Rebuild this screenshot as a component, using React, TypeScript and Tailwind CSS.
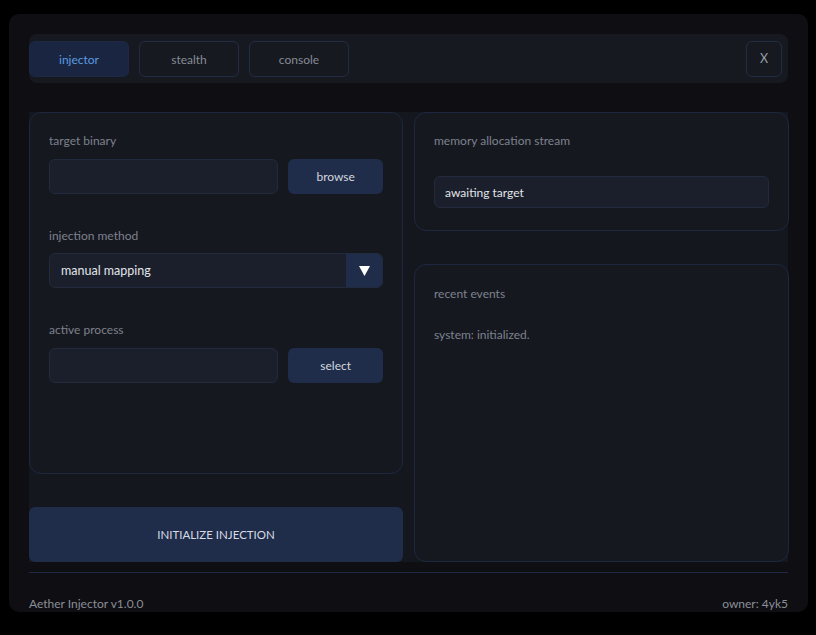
import { useState } from "react";

const font = { fontFamily: 'Lato, "Noto Sans", sans-serif' };

function Field({ label, action }: { label: string; action: string }) {
  return (
    <div>
      <div className="text-[12px] leading-4 text-[#7d828d]">{label}</div>
      <div className="mt-[10px] flex gap-[10px]">
        <div className="h-[35px] w-[230px] rounded-md border border-[#222a3d] bg-[#1b1f2b]" />
        <button className="h-[35px] w-[95px] rounded-md bg-[#1f2c4a] pt-px text-[12px] text-[#d3d7df]">
          {action}
        </button>
      </div>
    </div>
  );
}

export default function App() {
  const [tab, setTab] = useState("injector");
  const tabs = ["injector", "stealth", "console"];

  return (
    <div className="h-[635px] w-[816px] bg-black pl-[9px] pt-[14px]" style={font}>
      <div className="flex h-[598px] w-[799px] flex-col rounded-[10px] bg-[#0f0f13] px-5 pt-5">
        {/* tab bar */}
        <div className="flex h-[49px] items-center justify-between rounded-lg bg-[#161920] pr-[6px]">
          <div className="flex gap-[10px]">
            {tabs.map((t) => (
              <button
                key={t}
                onClick={() => setTab(t)}
                className={`h-9 w-[100px] rounded-md border pt-[2px] text-[12px] ${
                  t === tab
                    ? "border-[#1c2844] bg-[#1a2541] text-[#5b9be0]"
                    : "border-[#222d45] bg-[#161920] text-[#868b95]"
                }`}
              >
                {t}
              </button>
            ))}
          </div>
          <button className="h-9 w-9 rounded-md border border-[#222d45] pt-px text-[12.5px] text-[#9a9ea6]">
            X
          </button>
        </div>

        {/* content */}
        <div className="mt-[29px] grid h-[450px] grid-cols-[374px_375px] gap-x-[11px] bg-[#15171e]">
          <div className="flex flex-col">
            <div className="flex h-[362px] flex-col gap-[34px] rounded-xl border border-[#1d2740] bg-[#161820] px-[19px] pt-5">
              <Field label="target binary" action="browse" />
              <div>
                <div className="text-[12px] leading-4 text-[#7d828d]">injection method</div>
                <div className="mt-[9px] flex h-[35px] w-[334px] overflow-hidden rounded-md border border-[#222a3d] bg-[#1b1f2b]">
                  <div className="flex flex-1 items-center pl-[11px] pt-px text-[12.5px] text-[#e2e5ea]">
                    manual mapping
                  </div>
                  <div className="flex w-9 items-center justify-center bg-[#1f2c4a]">
                    <svg width="11" height="10" viewBox="0 0 11 10">
                      <path d="M0 0H11L5.5 10Z" fill="#ffffff" />
                    </svg>
                  </div>
                </div>
              </div>
              <Field label="active process" action="select" />
            </div>
            <button className="mt-[33px] h-[55px] rounded-md bg-[#1f2c4a] pt-px text-[11.5px] text-[#d7dbe3]">
              INITIALIZE INJECTION
            </button>
          </div>

          <div className="flex flex-col">
            <div className="h-[119px] rounded-xl border border-[#1d2740] bg-[#161820] px-[19px] pt-5">
              <div className="text-[12px] leading-4 text-[#7d828d]">memory allocation stream</div>
              <div className="mt-[27px] flex h-[32px] items-center rounded-md border border-[#222a3d] bg-[#1b1f2b] pl-[10px] pt-px text-[12px] text-[#e2e5ea]">
                awaiting target
              </div>
            </div>
            <div className="mt-[33px] h-[298px] rounded-xl border border-[#1d2740] bg-[#161820] px-[19px] pt-[21px]">
              <div className="text-[12px] leading-4 text-[#7d828d]">recent events</div>
              <div className="mt-[25px] text-[12px] leading-4 text-[#7d828d]">system: initialized.</div>
            </div>
          </div>
        </div>

        <div className="mt-[10px] h-px bg-[#1d2a45]" />
        <div className="mt-[23px] flex justify-between text-[12px] leading-4 text-[#8a8e97]">
          <span>Aether Injector v1.0.0</span>
          <span>owner: 4yk5</span>
        </div>
      </div>
    </div>
  );
}
